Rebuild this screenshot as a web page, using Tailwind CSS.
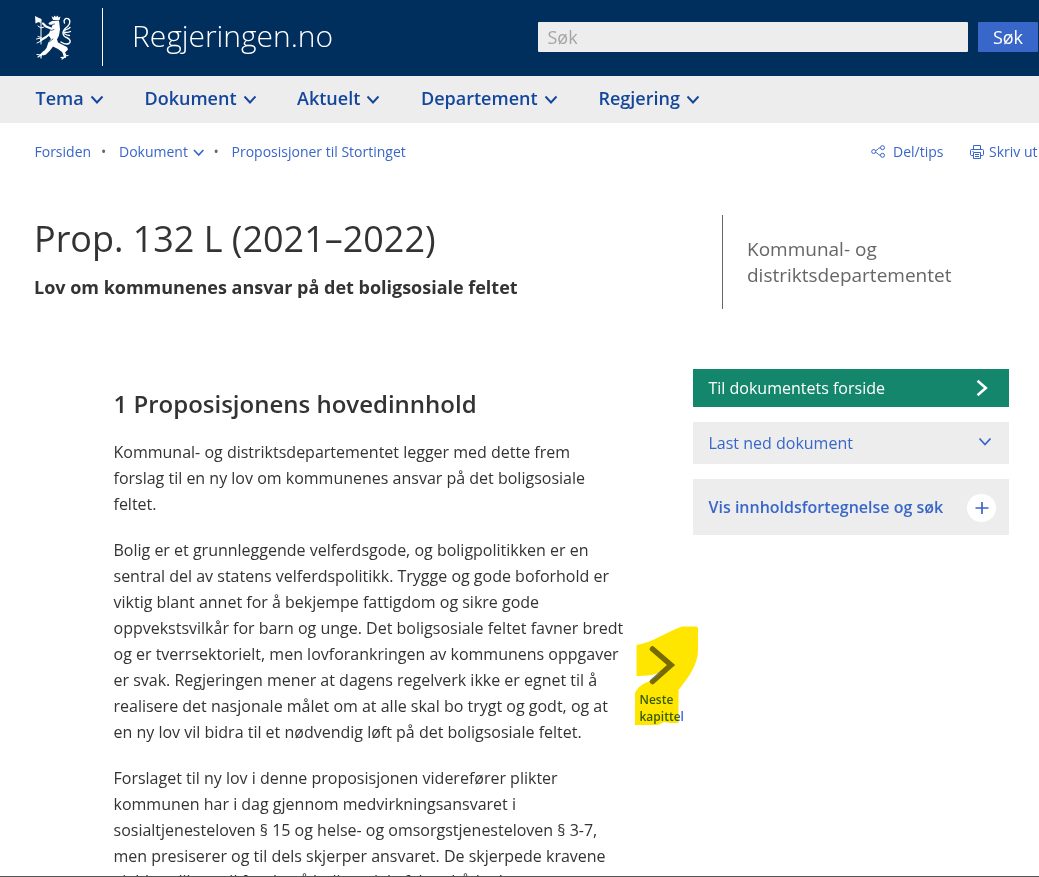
<!DOCTYPE html>
<html lang="no">
<head>
<meta charset="utf-8">
<title>Prop. 132 L (2021–2022) - regjeringen.no</title>
<script src="https://cdn.jsdelivr.net/npm/@tailwindcss/browser@4"></script>
</head>
<body class="relative h-[877px] w-[1039px] overflow-hidden bg-white font-['Open_Sans',sans-serif] whitespace-nowrap text-[#333]">
<header class="flex h-[76px] bg-[#002e5d] pl-[34px] text-white">
  <svg class="mt-[14px] h-[48px] w-[38px] shrink-0" viewBox="0 0 38 48" fill="none" stroke="#fff" stroke-linecap="round" stroke-linejoin="round">
    <path fill="#fff" stroke="none" d="M1 2l4 2 2.500 1-1 4-2-1-3 1.500zM17.500 2l2 1.500 1-2 1.500 1.500 1.500-1.500 1 2 2-1-1 3.500H19zM18 7l7-.5.5 4 .5 5-1 6-2 4 1 3 4 2 5 2.500 1 2.500-3 3 1.500 3-2.500.5-2-4-4-3-5-2.500-3 4-4 4-3 1-1.500-1.500 5-6 2-6 2.500-3-2-3 .5-4 2-4 1-3-3.500-.5-.5-1.500z"/>
    <path stroke-width="1" d="M7 6v24M4 12l3 2 3-1M2.500 25l4.500-1M3 29l4-2M4 22.500l3 1M19 4.500h6"/>
    <path stroke-width="2.200" d="M17 14.500l-5-2-3-3M17 19l-5 4-5 3M10 38l-3 3M30 39l1 4"/>
    <path stroke-width="1.200" d="M7 41l-4-.5M7 41l-3 2M7 42v2M31 43l-4 .5M31 43l-3 2M31 42l3-.5"/>
    <path stroke-width="1.400" d="M30.500 9c-1.500-3 1-5 3-4.500 3 .5 3 5 .5 7.500-2 2-4.500 3-5 6-.5 4 2 5 4.500 6 3 1.500 3.500 4 1.500 5.500-2 1-5 .5-8-1.500"/>
    <path stroke-width="1.300" d="M36 13.500c-2 2-4 2-6 3M36.500 17.500c-2 1-4 1-7 .5M35.500 21.500c-2 0-4-1-5.500-2"/>
    <path stroke="#002e5d" stroke-width=".7" d="M18 10.500l2.500-.5M17 16.500l3-1M15 28l4-3"/>
  </svg>
  <div class="mt-[8px] ml-[30px] h-[58px] w-px bg-white"></div>
  <div class="mt-[14px] ml-[29px] w-[406px] text-[30px] leading-[44px] font-light tracking-[-0.04px]"><span>Regjeringen.no</span></div>
  <div class="mt-[22px] h-[30px] w-[430px] shrink-0 rounded-[1px] bg-[#ededed] pl-[9.500px] text-[18px] leading-[30px] text-[#a5a5a5]">Søk</div>
  <div class="mt-[22px] ml-[10px] h-[30px] w-[60px] shrink-0 rounded-[1px] bg-[#3966c9] text-center text-[18px] leading-[30px]">Søk</div>
</header>
<nav class="flex h-[47px] bg-[#ededed] pl-[35.500px] text-[18px] leading-[45px] font-semibold text-[#14469c]">
  <div class="flex w-[109px] items-start"><span>Tema</span><svg class="mt-[19px] ml-[6px]" width="14" height="10" viewBox="0 0 14 10" fill="none" stroke="currentColor" stroke-width="1.900"><path d="M1.500 1.500L7 7.500l5.500-6"/></svg></div>
  <div class="flex w-[152.500px] items-start"><span>Dokument</span><svg class="mt-[19px] ml-[6px]" width="14" height="10" viewBox="0 0 14 10" fill="none" stroke="currentColor" stroke-width="1.900"><path d="M1.500 1.500L7 7.500l5.500-6"/></svg></div>
  <div class="flex w-[124px] items-start"><span>Aktuelt</span><svg class="mt-[19px] ml-[6px]" width="14" height="10" viewBox="0 0 14 10" fill="none" stroke="currentColor" stroke-width="1.900"><path d="M1.500 1.500L7 7.500l5.500-6"/></svg></div>
  <div class="flex w-[177.500px] items-start"><span>Departement</span><svg class="mt-[19px] ml-[6px]" width="14" height="10" viewBox="0 0 14 10" fill="none" stroke="currentColor" stroke-width="1.900"><path d="M1.500 1.500L7 7.500l5.500-6"/></svg></div>
  <div class="flex items-start"><span>Regjering</span><svg class="mt-[19px] ml-[6px]" width="14" height="10" viewBox="0 0 14 10" fill="none" stroke="currentColor" stroke-width="1.900"><path d="M1.500 1.500L7 7.500l5.500-6"/></svg></div>
</nav>
<div class="flex h-[92px] pt-[19px] pl-[34.500px] text-[14px] leading-[20px] text-[#3966c9]">
  <span class="w-[66.500px]">Forsiden</span><span class="w-[18px] text-[#666]">•</span>
  <span class="w-[74px]">Dokument</span><svg class="mt-[7px] w-[12px]" height="8" viewBox="0 0 12 8" fill="none" stroke="currentColor" stroke-width="1.700"><path d="M1 1l4.700 5 4.700-5"/></svg>
  <span class="ml-[8.500px] w-[18px] text-[#666]">•</span><span class="w-[639px]">Proposisjoner til Stortinget</span>
  <svg class="mt-[3px] w-[14px] shrink-0" height="13" viewBox="0 0 14 13" fill="none" stroke="currentColor" stroke-width="1"><circle cx="2.700" cy="6.500" r="2"/><circle cx="11.500" cy="2.700" r="2"/><circle cx="11.500" cy="10.300" r="2"/><path d="M4.500 5.500C7 5.500 6.500 2.700 9.500 2.700M4.500 7.500C7 7.500 6.500 10.300 9.500 10.300"/></svg>
  <span class="ml-[8.500px] w-[77px] shrink-0">Del/tips</span>
  <svg class="mt-[3px] w-[14px] shrink-0" height="14" viewBox="0 0 14 14" fill="none" stroke="currentColor" stroke-width="1"><path d="M3.500 4.500v-4h7v4M3 10.500H1.500q-1 0-1-1v-4q0-1 1-1h11q1 0 1 1v4q0 1-1 1H11M3.500 7.500h7v6h-7zM2.500 6.500h1M5 9.500h4M5 11.500h4"/></svg>
  <span class="ml-[5px] shrink-0">Skriv ut</span>
</div>
<main class="flex">
  <section class="w-[688px] shrink-0 pl-[34px]">
    <h1 class="text-[36px] leading-[48px] tracking-[-0.02px]"><span>Prop. 132 L (2021–2022)</span></h1>
    <p class="mt-[12px] text-[18px] leading-[24px] font-bold tracking-[-0.01px]"><span>Lov om kommunenes ansvar på det boligsosiale feltet</span></p>
    <article class="pt-[89px] pl-[79.500px] text-[16px] leading-[26px]">
      <h2 class="text-[24px] leading-[32px] font-semibold"><span>1 Proposisjonens hovedinnhold</span></h2>
      <p class="mt-[19px]">Kommunal- og distriktsdepartementet legger med dette frem<br>forslag til en ny lov om kommunenes ansvar på det boligsosiale<br>feltet.</p>
      <p class="mt-[20px]">Bolig er et grunnleggende velferdsgode, og boligpolitikken er en<br>sentral del av statens velferdspolitikk. Trygge og gode boforhold er<br>viktig blant annet for å bekjempe fattigdom og sikre gode<br>oppvekstsvilkår for barn og unge. Det boligsosiale feltet favner bredt<br>og er tverrsektorielt, men lovforankringen av kommunens oppgaver<br>er svak. Regjeringen mener at dagens regelverk ikke er egnet til å<br>realisere det nasjonale målet om at alle skal bo trygt og godt, og at<br>en ny lov vil bidra til et nødvendig løft på det boligsosiale feltet.</p>
      <p class="mt-[20px]">Forslaget til ny lov i denne proposisjonen viderefører plikter<br>kommunen har i dag gjennom medvirkningsansvaret i<br>sosialtjenesteloven § 15 og helse- og omsorgstjenesteloven § 3-7,<br>men presiserer og til dels skjerper ansvaret. De skjerpede kravene</p>
      <p class="-mt-[1.500px]">gjelder plikten til for de på boligsosiale feltet, både den</p>
    </article>
  </section>
  <aside class="w-[351px] shrink-0 pl-[5px] text-[16px]">
    <div class="ml-[29px] h-[94px] border-l border-[#666] pt-[21px] pl-[24px] text-[19px] leading-[26px] text-[#666]">Kommunal- og<br>distriktsdepartementet</div>
    <a class="mt-[60px] flex h-[38px] w-[316px] items-center justify-between bg-[#14866c] pr-[21px] pl-[15.500px] text-white"><span>Til dokumentets forside</span><svg width="12" height="18" viewBox="0 0 12 18" fill="none" stroke="currentColor" stroke-width="2.600"><path d="M1.500 1.800L9.800 9l-8.300 7.200"/></svg></a>
    <a class="mt-[15px] flex h-[42px] w-[316px] items-center justify-between bg-[#ededed] pr-[17px] pl-[15.500px] text-[#3966c9]"><span>Last ned dokument</span><svg class="mb-[2px]" width="14" height="10" viewBox="0 0 14 10" fill="none" stroke="currentColor" stroke-width="1.800"><path d="M1.500 1.500L7 7.500l5.500-6"/></svg></a>
    <a class="mt-[15px] flex h-[56px] w-[316px] items-center justify-between bg-[#ededed] pr-[13px] pl-[15.500px] font-semibold text-[#3966c9]"><span>Vis innholdsfortegnelse og søk</span><svg class="mt-[2px]" width="29" height="28" viewBox="0 0 29 28"><ellipse cx="14.500" cy="14" rx="14.500" ry="14" fill="#fff"/><path d="M8.500 14h13M15 8v12" stroke="currentColor" stroke-width="1.700"/></svg></a>
  </aside>
</main>
<div class="absolute top-[615px] left-[620px] h-[120px] w-[90px] text-[12px] leading-[17px] font-semibold text-[#3966c9]">
  <svg class="absolute inset-0" width="90" height="120" viewBox="0 0 90 120" fill="none"><path d="M32.500 34l18.500 16-18.500 16.500" stroke="#777" stroke-width="5.500" stroke-linecap="round"/></svg>
  <div class="absolute top-[76px] left-[19.500px]">Neste<br>kapittel</div>
  <svg class="absolute inset-0 mix-blend-multiply" width="90" height="120" viewBox="0 0 90 120"><path fill="#ffe600" d="M16.500 30C32 28 46 17 62 11.500H76q2 0 2 2V35C78 50 68 63 58.500 75V108H50l-6-1-6 3H15V78c3-6 7-9 15-12l12-9c-5 1-8 4-25.500 4z"/></svg>
</div>
<div class="absolute bottom-0 left-0 h-px w-full bg-[#555]"></div>
</body>
</html>
